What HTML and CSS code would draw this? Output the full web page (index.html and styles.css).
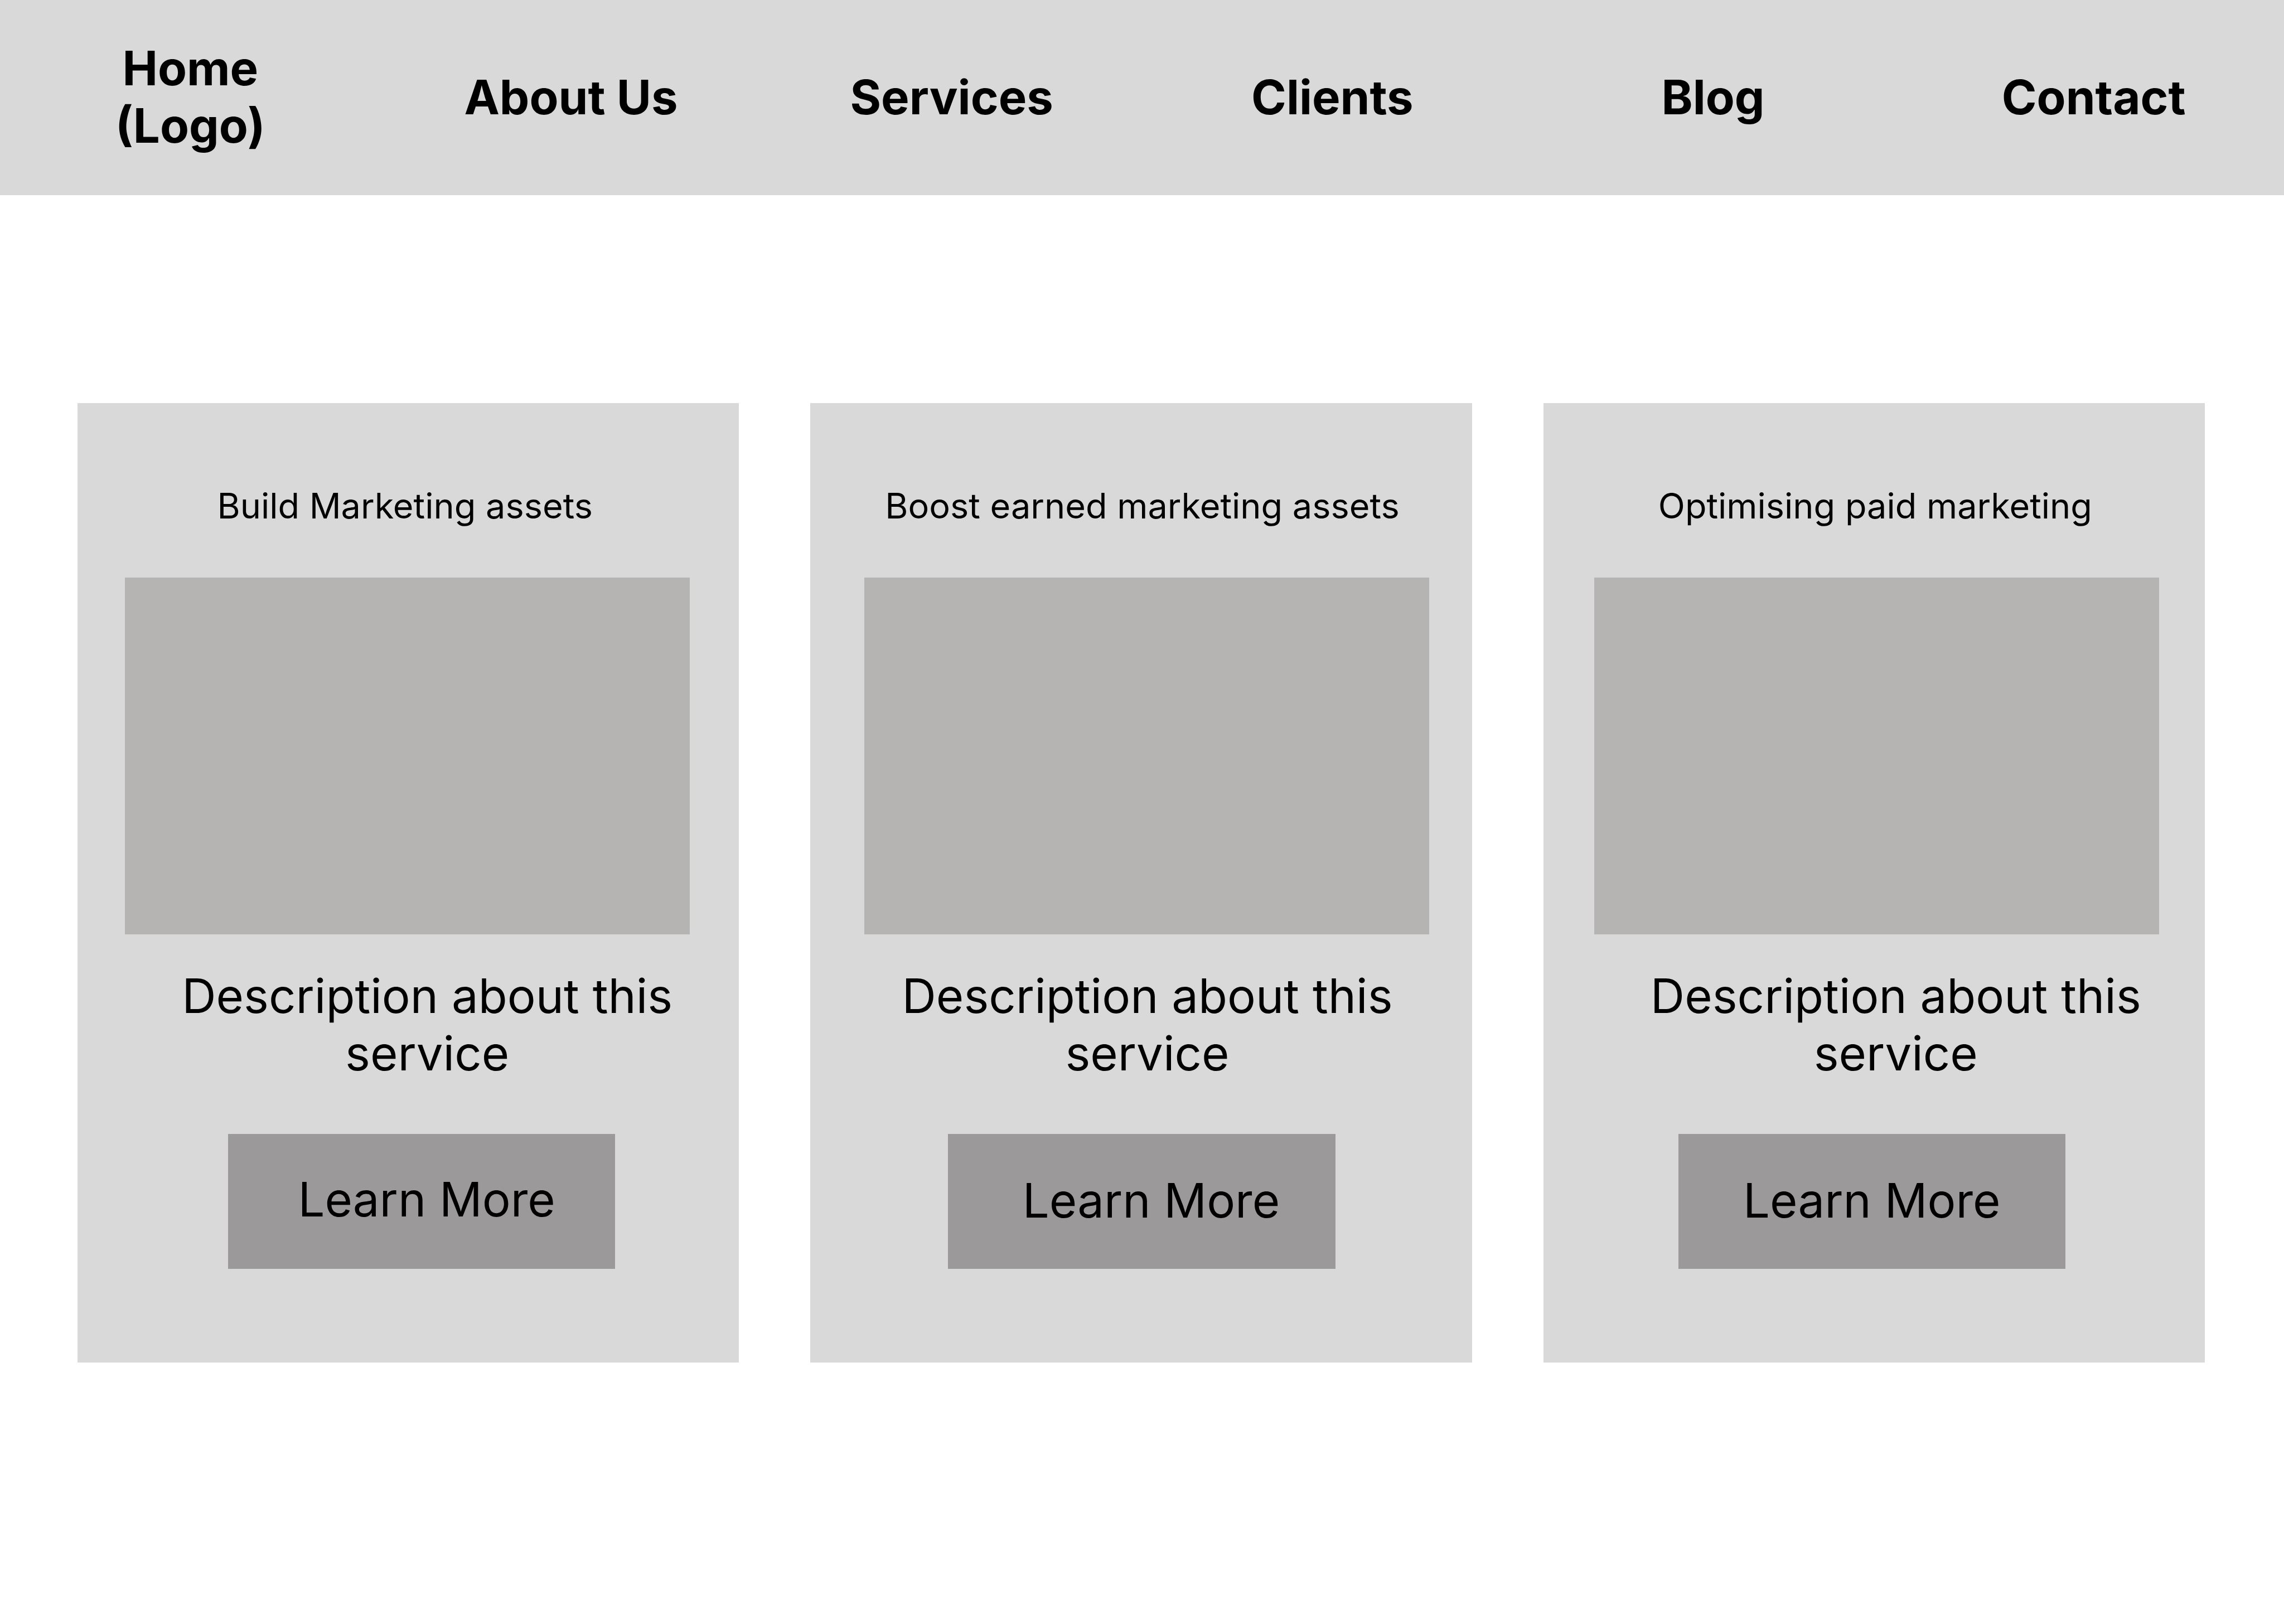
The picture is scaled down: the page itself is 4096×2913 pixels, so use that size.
FILE: index.html
```html
<!DOCTYPE html>
<html lang="en">
<head>
  <meta charset="utf-8">
  <meta name="viewport" content="width=device-width, initial-scale=1">
  <title>Services</title>
  <link rel="stylesheet" href="styles.css">
</head>
<body>
  <header class="site-header">
    <nav class="site-nav">
      <a class="nav-link" href="#home">Home<br>(Logo)</a>
      <a class="nav-link" href="#about">About Us</a>
      <a class="nav-link" href="#services">Services</a>
      <a class="nav-link" href="#clients">Clients</a>
      <a class="nav-link" href="#blog">Blog</a>
      <a class="nav-link" href="#contact">Contact</a>
    </nav>
  </header>
  <main class="services">
    <article class="card card-build">
      <h2 class="card-title">Build Marketing assets</h2>
      <div class="card-media"></div>
      <p class="card-text">Description about this<br>service</p>
      <button class="card-button" type="button">Learn More</button>
    </article>
    <article class="card card-boost">
      <h2 class="card-title">Boost earned marketing assets</h2>
      <div class="card-media"></div>
      <p class="card-text">Description about this<br>service</p>
      <button class="card-button" type="button">Learn More</button>
    </article>
    <article class="card card-optimise">
      <h2 class="card-title">Optimising paid marketing</h2>
      <div class="card-media"></div>
      <p class="card-text">Description about this<br>service</p>
      <button class="card-button" type="button">Learn More</button>
    </article>
  </main>
</body>
</html>
```
FILE: styles.css
```css
* {
  box-sizing: border-box;
}

body {
  margin: 0;
  background: #ffffff;
  color: #000000;
  font-family: Inter, "Liberation Sans", sans-serif;
  font-size: 85px;
  font-optical-sizing: none;
  line-height: 103px;
}

.site-header {
  background: #d9d9d9;
}

.site-nav {
  display: grid;
  grid-template-columns: repeat(6, 1fr);
  align-items: center;
  padding: 71px 0 73px;
}

.nav-link {
  color: inherit;
  font-weight: 700;
  text-align: center;
  text-decoration: none;
}

.services {
  display: grid;
  grid-template-columns: repeat(3, 1fr);
  gap: 128px;
  padding: 373px 142px 371px 139px;
}

.card {
  display: flex;
  flex-direction: column;
  padding: 146px 0 168px;
  background: #d9d9d9;
}

.card-title {
  margin: 0 0 91px;
  padding: var(--title-inset);
  font-size: 63px;
  font-weight: 400;
  line-height: 76px;
  text-align: center;
}

.card-media {
  height: 640px;
  margin: var(--media-inset);
  background: #b6b4b2;
}

.card-text {
  margin: 59px 0 93px;
  padding: var(--text-inset);
  text-align: center;
}

.card-button {
  height: 242px;
  margin: var(--button-inset);
  padding: var(--label-inset);
  border: 0;
  background: #9c999a;
  color: inherit;
  font: inherit;
  text-align: center;
  cursor: pointer;
}

.card-build {
  --title-inset: 0 12px 0 0;
  --media-inset: 0 88px 0 85px;
  --text-inset: 0 0 0 68px;
  --button-inset: 0 222px 0 270px;
  --label-inset: 0 0 8px 18px;
}

.card-boost {
  --title-inset: 0 0 0 4px;
  --media-inset: 0 77px 0 97px;
  --text-inset: 0 0 0 22px;
  --button-inset: 0 245px 0 247px;
  --label-inset: 0 0 4px 34px;
}

.card-optimise {
  --title-inset: 0 0 0 4px;
  --media-inset: 0 82px 0 91px;
  --text-inset: 0 0 0 78px;
  --button-inset: 0 250px 0 242px;
  --label-inset: 0 0 4px 0;
}
```
